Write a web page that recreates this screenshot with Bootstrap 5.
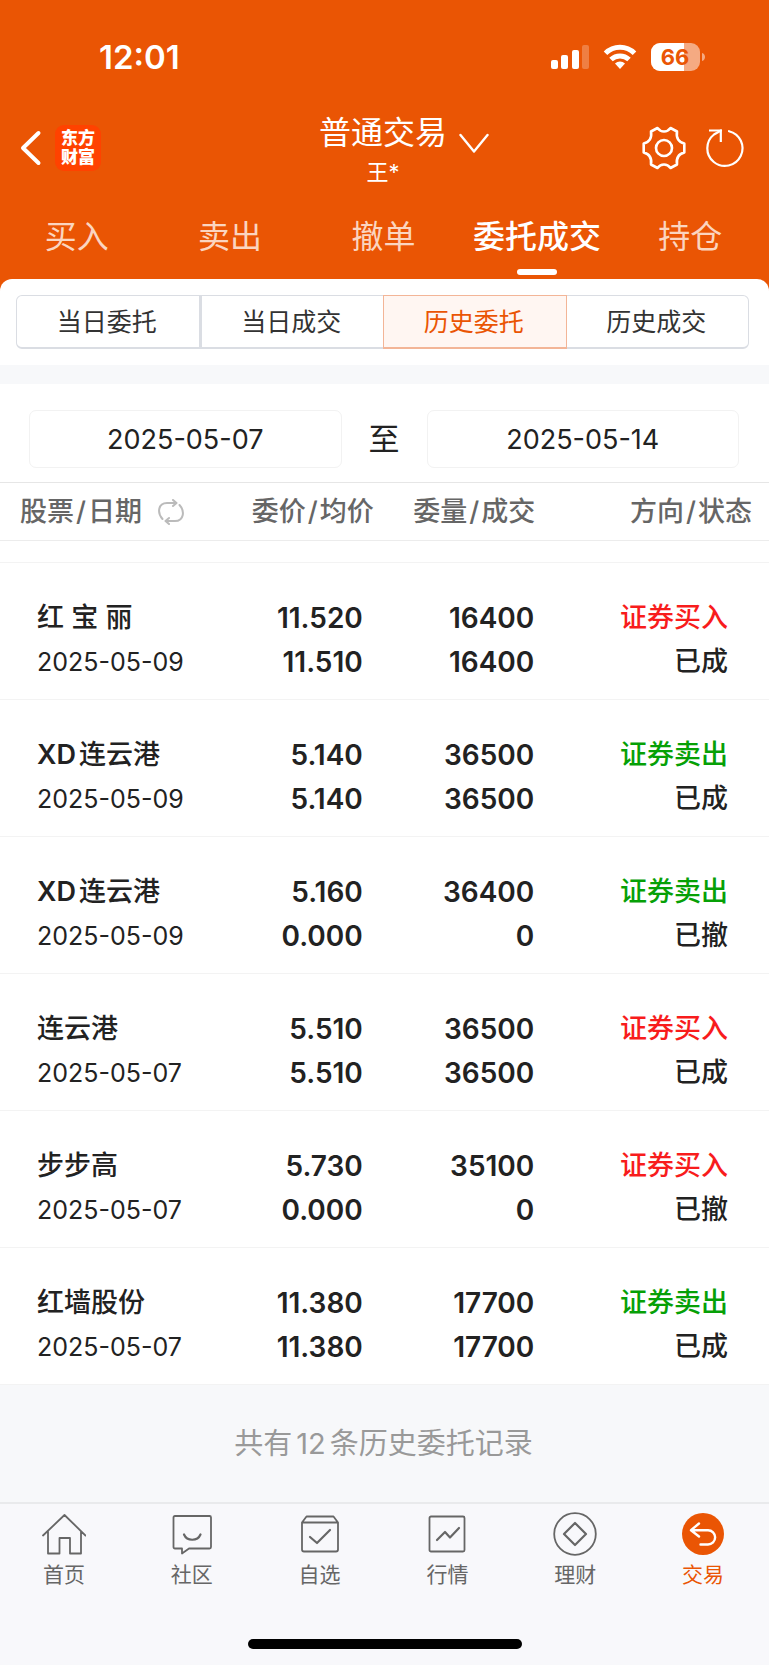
<!DOCTYPE html>
<html lang="zh-CN">
<head>
<meta charset="utf-8">
<meta name="viewport" content="width=device-width, initial-scale=1">
<title>普通交易</title>
<link href="https://cdn.jsdelivr.net/npm/bootstrap@5.3.0/dist/css/bootstrap.min.css" rel="stylesheet">
<style>
  :root { --brand: #ea5504; --ink: #222; --muted: #666; --page: #f7f8fa; }
  body { font-family: Inter, "Noto Sans CJK SC", sans-serif; color: var(--ink); background: var(--page); }
  svg { display: block; flex: none; }
  .topbar { background: var(--brand); color: #fff; }
  .plain { background: none; border: 0; padding: 0; color: inherit; }

  .status { height: 104px; padding: 10px 64px 0 99px; }
  .clock { font-size: 33px; font-weight: 600; line-height: 40px; }
  .status-icons { gap: 14px; }

  .titlebar { height: 88px; padding: 0 23px 0 20px; }
  .side { flex: 1 1 0; }
  .tools { gap: 18px; }
  .logo { width: 46px; height: 46px; border-radius: 9px; background: #ff4200; font-size: 17px; font-weight: 900; line-height: 19px; color: #fff; text-decoration: none; }
  .title-block { padding-top: 9px; line-height: 38px; }
  .title-btn { font-size: 32px; gap: 12px; padding-left: 42px; line-height: 40px; }
  .title-btn svg { margin-top: 18px; }
  .subtitle { font-size: 22px; }

  .main-tabs { padding-right: 2px; }
  .main-tabs a { flex: 1 1 0; padding: 23px 0 4px; font-size: 32px; line-height: 44px; color: #fbd5c0; text-decoration: none; white-space: nowrap; }
  .main-tabs a::after { content: ""; width: 40px; height: 6px; margin-top: 10px; border-radius: 3px; }
  .main-tabs a.active { color: #fff; font-weight: 500; }
  .main-tabs a.active::after { background: #fff; }

  .sheet-wrap { background: var(--brand); }
  .sheet { background: #fff; border-radius: 12px 12px 0 0; padding: 16px 20px 16px 16px; }
  .segments .btn { flex: 1 1 0; height: 54px; padding: 2px 2px 0 0; font-size: 25px; color: #333; border: 1px solid #dadde3; border-bottom-width: 2px; border-radius: 6px; }
  .segments .btn:first-child { border-right-width: 3px; }
  .segments .btn.active { color: var(--brand); background: #fff6f2; border-color: #f3b597; z-index: 1; }
  .band { height: 19px; background: var(--page); }

  .range { background: #fff; padding: 26px 30px 14px 29px; gap: 27px; font-size: 31px; line-height: 58px; border-bottom: 1px solid #e6e6e6; }
  .range .form-control { flex: 1 1 0; min-width: 0; height: 58px; padding: 0; font-size: 27px; text-align: center; color: var(--ink); background: #fff; border: 1px solid #f2f2f2; border-radius: 7px; }

  .orders { table-layout: fixed; width: 100%; background: #fff; margin: 0; white-space: nowrap; }
  .orders th, .orders td { padding: 0; text-align: right; vertical-align: top; }
  .orders thead th { height: 57px; line-height: 56px; font-size: 27px; font-weight: 500; color: var(--muted); border-bottom: 1px solid #ececec; padding: 1px 3px 0 0; }
  .orders thead th:first-child { padding-left: 20px; }
  .orders thead th:last-child { padding-right: 17px; }
  .orders i { font-style: normal; margin: 0 2px; }
  .orders tbody tr { border-bottom: 1px solid #f3f3f3; }
  .orders .gap-row td { height: 22px; padding: 0; }
  .orders td { padding: 33px 4px 15px 0; font-size: 28px; font-weight: 600; line-height: 44px; }
  .orders td:nth-child(2) { padding-right: 14px; }
  .orders td:first-child { padding-left: 37px; text-align: left; font-size: 27px; font-weight: 500; }
  .orders td:last-child { padding-right: 41px; font-size: 27px; font-weight: 500; }
  .orders b { font-weight: 600; margin-right: 3px; }
  .orders .day { font-size: 25px; font-weight: 400; }
  .c1 { width: 30%; } .c2 { width: 19%; } .c3 { width: 21%; } .c4 { width: 30%; }
  .buy { color: #f81c1c; } .sell { color: #06a006; }

  .total { padding: 37px 2px 36px 0; font-size: 29px; line-height: 44px; color: #999; }
  .tabbar { border-top: 2px solid #e9eaec; background: #f8f8fb; padding-right: 2px; }
  .tabbar a { flex: 1 1 0; padding-top: 8px; gap: 4px; font-size: 21px; line-height: 30px; color: var(--muted); text-decoration: none; }
  .tabbar a.active { color: var(--brand); }
  .home-area { background: #f8f8fb; padding: 49px 0 16px; }
  .home-bar { width: 274px; height: 10px; border-radius: 5px; background: #000; }
</style>
</head>
<body>
<header class="topbar">
  <div class="status d-flex align-items-center justify-content-between">
    <span class="clock">12:01</span>
    <div class="status-icons d-flex align-items-center">
      <svg width="38" height="26" viewBox="0 0 38 26" fill="#fff"><rect y="16" width="7" height="9" rx="2"/><rect x="10" y="11" width="7" height="14" rx="2"/><rect x="21" y="6" width="7" height="19" rx="2"/><rect x="31" y="1" width="7" height="24" rx="2" opacity=".25"/></svg>
      <svg width="34" height="26" viewBox="0 0 34 26" fill="none" stroke="#fff" stroke-width="5"><path d="M2.500 9.300a20.500 20.500 0 0 1 29 0"/><path d="M8 15.500a13 13 0 0 1 18 0"/><path d="M12 19.500a7.500 7.500 0 0 1 10 0L17 25z" fill="#fff" stroke="none"/></svg>
      <svg width="54" height="28" viewBox="0 0 54 28"><defs><clipPath id="cell"><rect width="49" height="28" rx="9"/></clipPath></defs><g clip-path="url(#cell)"><rect width="49" height="28" fill="#f5aa82"/><rect width="33" height="28" fill="#fff"/></g><path d="M51 10c4 1 4 7 0 8z" fill="#f5aa82"/><text x="24" y="22" text-anchor="middle" font-size="22" font-weight="700" fill="#ea5504">66</text></svg>
    </div>
  </div>
  <div class="titlebar d-flex align-items-center">
    <div class="side d-flex align-items-center">
      <button class="plain" type="button" aria-label="返回"><svg width="35" height="36" viewBox="0 0 35 36" fill="none" stroke="#fff" stroke-width="4" stroke-linecap="round" stroke-linejoin="round"><path d="M18.500 3L3 18l15.500 15"/></svg></button>
      <a class="logo d-flex align-items-center justify-content-center text-center" href="#">东方<br>财富</a>
    </div>
    <div class="title-block d-flex flex-column align-items-center align-self-start">
      <button class="plain title-btn d-flex" type="button">普通交易<svg width="30" height="22" viewBox="0 0 30 22" fill="none" stroke="#fff" stroke-width="2.400" stroke-linecap="round" stroke-linejoin="round"><path d="M1.500 4L15 20.500 28.500 4"/></svg></button>
      <span class="subtitle">王*</span>
    </div>
    <div class="side tools d-flex justify-content-end">
      <button class="plain" type="button" aria-label="设置"><svg width="48" height="44" viewBox="-24 -22 48 44" fill="none" stroke="#fff" stroke-width="2.600" stroke-linejoin="round"><circle r="8"/><path d="M-6.500-20L-13-16.500C-12-10-14.500-6-20.300-4.500V4.500C-14.500 6-12 10-13 16.500L-6.500 20C-3 15.300 3 15.300 6.500 20L13 16.500C12 10 14.500 6 20.300 4.500V-4.500C14.500-6 12-10 13-16.500L6.500-20C3-15.300-3-15.300-6.500-20Z"/></svg></button>
      <button class="plain" type="button" aria-label="刷新"><svg width="40" height="44" viewBox="0 0 40 44" fill="none" stroke="#fff" stroke-width="2.200"><path d="M23 5.200A17.600 17.600 0 1 1 8 8.500L15 4.500" stroke-linecap="round"/><path d="M3 4.500H14.800V16"/></svg></button>
    </div>
  </div>
  <nav class="main-tabs d-flex">
    <a class="d-flex flex-column align-items-center" href="#">买入</a>
    <a class="d-flex flex-column align-items-center" href="#">卖出</a>
    <a class="d-flex flex-column align-items-center" href="#">撤单</a>
    <a class="d-flex flex-column align-items-center active" href="#" aria-current="page">委托成交</a>
    <a class="d-flex flex-column align-items-center" href="#">持仓</a>
  </nav>
</header>

<main>
  <div class="sheet-wrap">
    <div class="sheet">
      <div class="segments btn-group d-flex" role="group" aria-label="记录类型">
        <button class="btn" type="button">当日委托</button>
        <button class="btn" type="button">当日成交</button>
        <button class="btn active" type="button">历史委托</button>
        <button class="btn" type="button">历史成交</button>
      </div>
    </div>
  </div>
  <div class="band"></div>
  <form class="range d-flex align-items-center">
    <input class="form-control" type="text" value="2025-05-07" aria-label="开始日期">
    <span>至</span>
    <input class="form-control" type="text" value="2025-05-14" aria-label="结束日期">
  </form>

  <table class="orders">
    <colgroup><col class="c1"><col class="c2"><col class="c3"><col class="c4"></colgroup>
    <thead>
      <tr>
        <th scope="col"><div class="d-flex align-items-center">股票<i>/</i>日期<button class="plain ms-3" type="button" aria-label="切换"><svg width="26" height="26" viewBox="0 0 26 26" fill="none" stroke="#bbb" stroke-width="2" stroke-linecap="round" stroke-linejoin="round"><path d="M4.500 20C-1 14 0 4 9 4H18M15 1l3.500 3L15 7M21.500 6C27 12 26 22 17 22H8M11 19l-3.500 3L11 25"/></svg></button></div></th>
        <th scope="col">委价<i>/</i>均价</th>
        <th scope="col">委量<i>/</i>成交</th>
        <th scope="col">方向<i>/</i>状态</th>
      </tr>
    </thead>
    <tbody>
      <tr class="gap-row"><td colspan="4"></td></tr>
      <tr><td>红 宝 丽<div class="day">2025-05-09</div></td><td>11.520<br>11.510</td><td>16400<br>16400</td><td><span class="buy">证券买入</span><br>已成</td></tr>
      <tr><td><b>XD</b>连云港<div class="day">2025-05-09</div></td><td>5.140<br>5.140</td><td>36500<br>36500</td><td><span class="sell">证券卖出</span><br>已成</td></tr>
      <tr><td><b>XD</b>连云港<div class="day">2025-05-09</div></td><td>5.160<br>0.000</td><td>36400<br>0</td><td><span class="sell">证券卖出</span><br>已撤</td></tr>
      <tr><td>连云港<div class="day">2025-05-07</div></td><td>5.510<br>5.510</td><td>36500<br>36500</td><td><span class="buy">证券买入</span><br>已成</td></tr>
      <tr><td>步步高<div class="day">2025-05-07</div></td><td>5.730<br>0.000</td><td>35100<br>0</td><td><span class="buy">证券买入</span><br>已撤</td></tr>
      <tr><td>红墙股份<div class="day">2025-05-07</div></td><td>11.380<br>11.380</td><td>17700<br>17700</td><td><span class="sell">证券卖出</span><br>已成</td></tr>
    </tbody>
  </table>
  <div class="total text-center">共有<span class="mx-1">12</span>条历史委托记录</div>
</main>

<footer>
  <nav class="tabbar d-flex">
    <a class="d-flex flex-column align-items-center" href="#"><svg width="44" height="44" viewBox="0 0 44 44" fill="none" stroke="#666" stroke-width="1.800" stroke-linecap="round" stroke-linejoin="round"><path d="M1 23.500L22.500 3 43.500 23.500M6 19.500V41.500H17.500V26H28V41.500H39V19.500"/></svg>首页</a>
    <a class="d-flex flex-column align-items-center" href="#"><svg width="44" height="44" viewBox="0 0 44 44" fill="none" stroke="#666" stroke-width="1.800" stroke-linecap="round" stroke-linejoin="round"><path d="M5 4H39.500Q41 4 41 5.500V35Q41 36.500 39.500 36.500H19L12 41.500V36.500H5Q3.500 36.500 3.500 35V5.500Q3.500 4 5 4Z"/><path d="M14 22.500C17 29.500 27.500 29.500 30.500 22.500" stroke-width="2.200"/></svg>社区</a>
    <a class="d-flex flex-column align-items-center" href="#"><svg width="44" height="44" viewBox="0 0 44 44" fill="none" stroke="#666" stroke-width="1.800" stroke-linecap="round" stroke-linejoin="round"><path d="M4 10.500H40V37.500Q40 39.500 38 39.500H6Q4 39.500 4 37.500ZM4 10.500L8.500 4.500H35.500L40 10.500"/><path d="M12 25L19 31 32 18" stroke-width="2.200"/></svg>自选</a>
    <a class="d-flex flex-column align-items-center" href="#"><svg width="44" height="44" viewBox="0 0 44 44" fill="none" stroke="#666" stroke-width="1.800" stroke-linecap="round" stroke-linejoin="round"><rect x="4.500" y="4.500" width="35" height="35" rx="1.500"/><path d="M12 28L20 20 25 25.500 34 16" stroke-width="2.200"/></svg>行情</a>
    <a class="d-flex flex-column align-items-center" href="#"><svg width="44" height="44" viewBox="0 0 44 44" fill="none" stroke="#666" stroke-width="1.800" stroke-linejoin="round"><circle cx="22" cy="22" r="20.800"/><path d="M22 11L33 22 22 33 11 22Z" stroke-width="2.200"/></svg>理财</a>
    <a class="d-flex flex-column align-items-center active" href="#" aria-current="page"><svg width="44" height="44" viewBox="0 0 44 44" fill="none" stroke="#fff" stroke-width="2.400" stroke-linecap="round" stroke-linejoin="round"><circle cx="22" cy="22" r="21" fill="#ea5504" stroke="none"/><path d="M18 11.500L10 18.200 18 24.500M10.500 18.200H27A7 7 0 0 1 27 32.500H19.500"/></svg>交易</a>
  </nav>
  <div class="home-area"><div class="home-bar mx-auto"></div></div>
</footer>
<script src="https://cdn.jsdelivr.net/npm/bootstrap@5.3.0/dist/js/bootstrap.bundle.min.js"></script>
</body>
</html>
